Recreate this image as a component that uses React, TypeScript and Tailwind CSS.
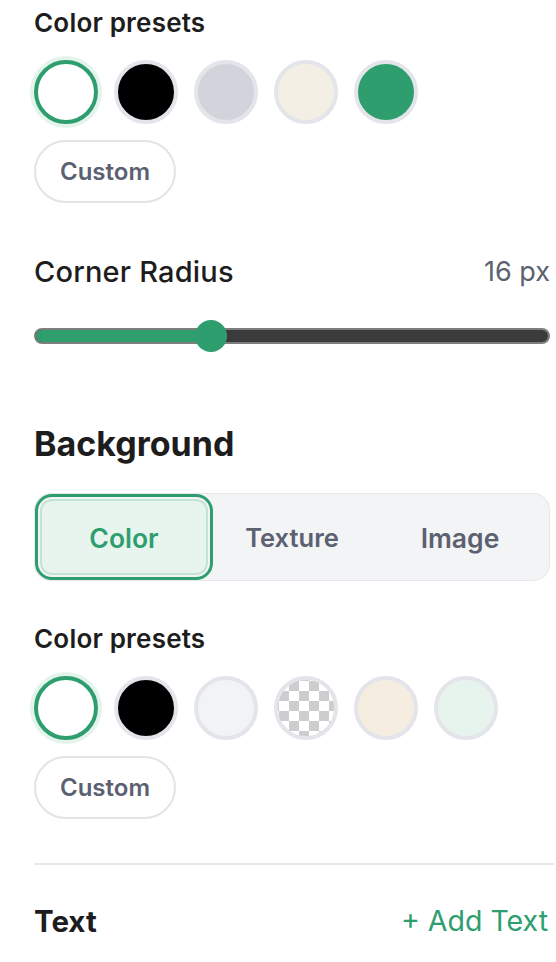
import React from "react";

const green = "#2e9e6e";

function Swatch({ color, selected, checker }: { color?: string; selected?: boolean; checker?: boolean }) {
  if (selected) {
    return (
      <div className="w-[64px] h-[64px] rounded-full border-[4px] border-[#2e9e6e] bg-white shadow-[0_0_0_4px_#e4f3eb]" />
    );
  }
  if (checker) {
    return (
      <div className="w-[64px] h-[64px] rounded-full border-[4px] border-[#e4e5ea] bg-white bg-[conic-gradient(#cdcdcd_25%,#ffffff_0_50%,#cdcdcd_0_75%,#ffffff_0)] bg-size-[20px_20px] bg-position-[1px_1px]" />
    );
  }
  return (
    <div
      className="w-[64px] h-[64px] rounded-full border-[4px] border-[#e4e5ea]"
      style={{ backgroundColor: color }}
    />
  );
}

function Presets({ colors }: { colors: { color?: string; selected?: boolean; checker?: boolean }[] }) {
  return (
    <div>
      <p className="text-[26px] leading-[30px] tracking-[0.2px] font-semibold text-[#1d1d20]">Color presets</p>
      <div className="mt-[22px] flex gap-[16px]">
        {colors.map((c, i) => (
          <Swatch key={i} {...c} />
        ))}
      </div>
      <button className="mt-[16px] h-[63px] w-[142px] rounded-full border-2 border-[#e3e4e8] bg-white text-[24px] font-semibold text-[#5b6170]">
        Custom
      </button>
    </div>
  );
}

export default function App() {
  return (
    <div className="w-[556px] h-[962px] overflow-hidden bg-white pl-[34px] pr-[6px] pt-[8px] font-['Inter',sans-serif]">
      <Presets
        colors={[
          { selected: true },
          { color: "#000000" },
          { color: "#d1d5db" },
          { color: "#f3efe4" },
          { color: green },
        ]}
      />

      <div className="mt-[53px] flex items-center justify-between">
        <span className="text-[29px] leading-[32px] tracking-[0.2px] font-medium text-[#1d1d20]">Corner Radius</span>
        <span className="text-[27px] leading-[32px] text-[#5c6170]">16 px</span>
      </div>

      <div className="mt-[32px] relative h-[32px] flex items-center">
        <div className="w-full h-[16px] rounded-full border-2 border-[#7e7e7e] bg-[#3b3b3b] overflow-hidden">
          <div className="h-full w-[175px] bg-[#2e9e6e]" />
        </div>
        <div className="absolute left-[161px] top-0 w-[32px] h-[32px] rounded-full bg-[#2e9e6e]" />
      </div>

      <h2 className="mt-[73px] text-[34px] leading-[38px] font-bold text-[#1d1d20]">Background</h2>

      <div className="mt-[30px] h-[88px] rounded-[16px] border-[1.5px] border-[#e5e7eb] bg-[#f3f4f6] p-[5px] grid grid-cols-3">
        <div className="flex items-center justify-center pt-[3px] rounded-[12px] border-2 border-[#c4e4d3] bg-[#e8f4ee] outline-[3px] outline-solid outline-[#2e9e6e] outline-offset-[2px] text-[26.5px] font-semibold text-[#2e9e6e]">
          Color
        </div>
        <div className="flex items-center justify-center pt-[3px] text-[25.5px] font-semibold text-[#5b6170]">Texture</div>
        <div className="flex items-center justify-center pt-[3px] text-[26.5px] font-semibold text-[#5b6170]">Image</div>
      </div>

      <div className="mt-[43px]">
        <Presets
          colors={[
            { selected: true },
            { color: "#000000" },
            { color: "#f2f3f5" },
            { checker: true },
            { color: "#f6ede1" },
            { color: "#e7f4ee" },
          ]}
        />
      </div>

      <div className="mt-[44px] h-[2px] bg-[#e5e7eb] -mr-[4px]" />

      <div className="mt-[39px] flex items-center justify-between">
        <span className="text-[29.5px] leading-[34px] font-bold text-[#1d1d20]">Text</span>
        <span className="text-[28.5px] leading-[34px] text-[#2e9e6e] pr-[2px]">+ Add Text</span>
      </div>
    </div>
  );
}
